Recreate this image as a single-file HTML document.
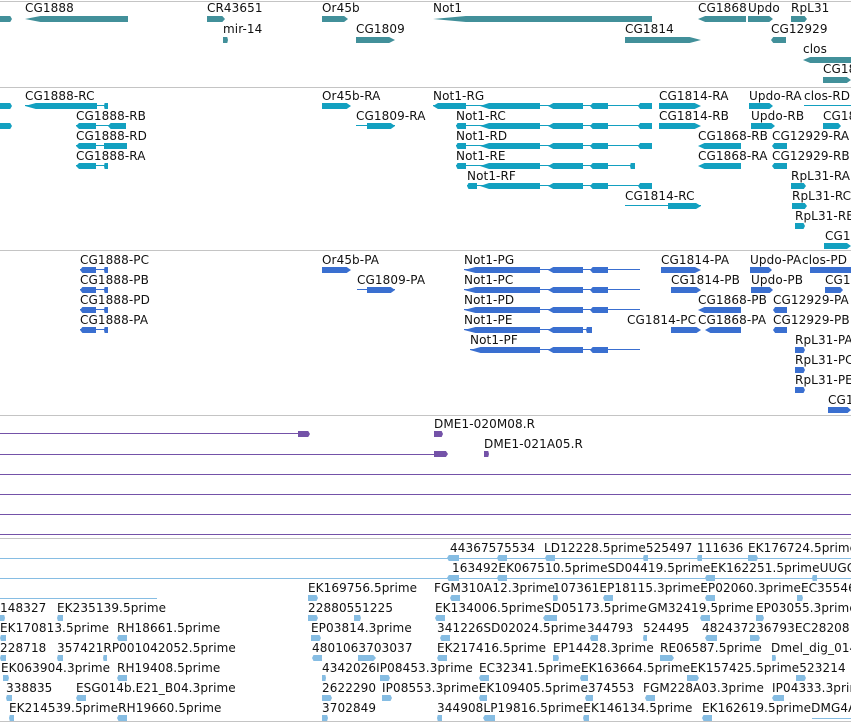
<!DOCTYPE html>
<html><head><meta charset="utf-8"><style>
body{margin:0;width:851px;height:723px;background:#fff;position:relative;overflow:hidden;font-family:"DejaVu Sans","Liberation Sans",sans-serif}
.t{position:absolute;font-size:12px;line-height:12px;color:#111;white-space:nowrap;letter-spacing:0.1px}
.b{position:absolute;height:6px}
.l{position:absolute;height:1px}
.h{position:absolute;left:0;width:851px;height:1px;background:#c4c4c4}
.g{background:#42909a}.r{background:#13a0c0}.p{background:#3a6fd0}.u{background:#7452a8}.e{background:#86bde3}
.ar{clip-path:polygon(0 0,85% 0,100% 50%,85% 100%,0 100%)}
.al{clip-path:polygon(15% 0,100% 0,100% 100%,15% 100%,0 50%)}
</style></head><body>
<div class="h" style="top:1px"></div>
<div class="h" style="top:87px"></div>
<div class="h" style="top:250px"></div>
<div class="h" style="top:415px"></div>
<div class="h" style="top:538px"></div>
<div class="h" style="top:721px"></div>

<!-- genes -->
<div class="b g ar" style="left:0;width:12px;top:16px"></div>
<div class="t" style="left:25px;top:2px">CG1888</div><div class="b g al" style="left:25px;width:103px;top:16px"></div>
<div class="t" style="left:207px;top:2px">CR43651</div><div class="b g ar" style="left:207px;width:18px;top:16px"></div>
<div class="t" style="left:223px;top:23px">mir-14</div><div class="b g ar" style="left:223px;width:5px;top:37px"></div>
<div class="t" style="left:322px;top:2px">Or45b</div><div class="b g ar" style="left:322px;width:26px;top:16px"></div>
<div class="t" style="left:356px;top:23px">CG1809</div><div class="b g ar" style="left:356px;width:39px;top:37px"></div>
<div class="t" style="left:433px;top:2px">Not1</div><div class="b g al" style="left:433px;width:219px;top:16px"></div>
<div class="t" style="left:625px;top:23px">CG1814</div><div class="b g ar" style="left:625px;width:76px;top:37px"></div>
<div class="t" style="left:698px;top:2px">CG1868</div><div class="b g al" style="left:698px;width:48px;top:16px"></div>
<div class="t" style="left:748px;top:2px">Updo</div><div class="b g ar" style="left:748px;width:25px;top:16px"></div>
<div class="t" style="left:791px;top:2px">RpL31</div><div class="b g ar" style="left:791px;width:16px;top:16px"></div>
<div class="t" style="left:771px;top:23px">CG12929</div><div class="b g al" style="left:771px;width:15px;top:37px"></div>
<div class="t" style="left:803px;top:43px">clos</div><div class="b g al" style="left:803px;width:48px;top:57px"></div>
<div class="t" style="left:823px;top:63px">CG18</div><div class="b g ar" style="left:823px;width:28px;top:77px"></div>

<!-- transcripts -->
<div class="b r ar" style="left:0;width:12px;top:103px"></div>
<div class="b r ar" style="left:0;width:12px;top:123px"></div>
<div class="t" style="left:25px;top:90px">CG1888-RC</div><div class="l r" style="left:25px;width:83px;top:105px"></div><div class="b r al" style="left:25px;width:72px;top:103px"></div><div class="b r al" style="left:104px;width:4px;top:103px"></div>
<div class="t" style="left:76px;top:110px">CG1888-RB</div><div class="l r" style="left:76px;width:50px;top:125px"></div><div class="b r al" style="left:76px;width:20px;top:123px"></div><div class="b r al" style="left:108px;width:18px;top:123px"></div>
<div class="t" style="left:76px;top:130px">CG1888-RD</div><div class="l r" style="left:76px;width:51px;top:145px"></div><div class="b r al" style="left:76px;width:20px;top:143px"></div><div class="b r" style="left:104px;width:23px;top:143px"></div>
<div class="t" style="left:76px;top:150px">CG1888-RA</div><div class="l r" style="left:76px;width:32px;top:165px"></div><div class="b r al" style="left:76px;width:20px;top:163px"></div><div class="b r al" style="left:104px;width:4px;top:163px"></div>
<div class="t" style="left:322px;top:90px">Or45b-RA</div><div class="b r ar" style="left:322px;width:29px;top:103px"></div>
<div class="t" style="left:356px;top:110px">CG1809-RA</div><div class="l r" style="left:356px;width:39px;top:125px"></div><div class="b r ar" style="left:367px;width:28px;top:123px"></div>

<div class="t" style="left:433px;top:90px">Not1-RG</div><div class="l r" style="left:433px;width:219px;top:105px"></div><div class="b r al" style="left:433px;width:33px;top:103px"></div><div class="b r al" style="left:480px;width:60px;top:103px"></div><div class="b r al" style="left:548px;width:35px;top:103px"></div><div class="b r al" style="left:590px;width:18px;top:103px"></div><div class="b r al" style="left:638px;width:14px;top:103px"></div>
<div class="t" style="left:456px;top:110px">Not1-RC</div><div class="l r" style="left:456px;width:196px;top:125px"></div><div class="b r al" style="left:456px;width:10px;top:123px"></div><div class="b r al" style="left:480px;width:60px;top:123px"></div><div class="b r al" style="left:548px;width:35px;top:123px"></div><div class="b r al" style="left:590px;width:18px;top:123px"></div><div class="b r al" style="left:638px;width:14px;top:123px"></div>
<div class="t" style="left:456px;top:130px">Not1-RD</div><div class="l r" style="left:456px;width:196px;top:145px"></div><div class="b r al" style="left:456px;width:10px;top:143px"></div><div class="b r al" style="left:480px;width:60px;top:143px"></div><div class="b r al" style="left:548px;width:35px;top:143px"></div><div class="b r al" style="left:590px;width:18px;top:143px"></div><div class="b r al" style="left:638px;width:14px;top:143px"></div>
<div class="t" style="left:456px;top:150px">Not1-RE</div><div class="l r" style="left:456px;width:179px;top:165px"></div><div class="b r al" style="left:456px;width:10px;top:163px"></div><div class="b r al" style="left:480px;width:60px;top:163px"></div><div class="b r al" style="left:548px;width:35px;top:163px"></div><div class="b r al" style="left:590px;width:18px;top:163px"></div><div class="b r al" style="left:630px;width:5px;top:163px"></div>
<div class="t" style="left:467px;top:170px">Not1-RF</div><div class="l r" style="left:467px;width:185px;top:185px"></div><div class="b r al" style="left:467px;width:10px;top:183px"></div><div class="b r al" style="left:480px;width:60px;top:183px"></div><div class="b r al" style="left:548px;width:35px;top:183px"></div><div class="b r al" style="left:590px;width:18px;top:183px"></div><div class="b r al" style="left:638px;width:14px;top:183px"></div>
<div class="t" style="left:625px;top:190px">CG1814-RC</div><div class="l r" style="left:625px;width:76px;top:205px"></div><div class="b r ar" style="left:668px;width:33px;top:203px"></div>
<div class="t" style="left:659px;top:90px">CG1814-RA</div><div class="b r ar" style="left:659px;width:42px;top:103px"></div>
<div class="t" style="left:659px;top:110px">CG1814-RB</div><div class="b r ar" style="left:659px;width:42px;top:123px"></div>
<div class="t" style="left:698px;top:130px">CG1868-RB</div><div class="b r al" style="left:698px;width:43px;top:143px"></div>
<div class="t" style="left:698px;top:150px">CG1868-RA</div><div class="b r al" style="left:698px;width:43px;top:163px"></div>
<div class="t" style="left:749px;top:90px">Updo-RA</div><div class="b r ar" style="left:749px;width:24px;top:103px"></div>
<div class="t" style="left:804px;top:90px">clos-RD</div><div class="l r" style="left:804px;width:47px;top:105px"></div>
<div class="t" style="left:751px;top:110px">Updo-RB</div><div class="b r ar" style="left:751px;width:24px;top:123px"></div>
<div class="t" style="left:823px;top:110px">CG18</div><div class="b r ar" style="left:823px;width:18px;top:123px"></div>
<div class="t" style="left:772px;top:130px">CG12929-RA</div><div class="b r al" style="left:772px;width:15px;top:143px"></div>
<div class="t" style="left:772px;top:150px">CG12929-RB</div><div class="b r al" style="left:772px;width:15px;top:163px"></div>
<div class="t" style="left:791px;top:170px">RpL31-RA</div><div class="b r ar" style="left:791px;width:15px;top:183px"></div>
<div class="t" style="left:792px;top:190px">RpL31-RC</div><div class="b r ar" style="left:792px;width:15px;top:203px"></div>
<div class="t" style="left:795px;top:210px">RpL31-RE</div><div class="b r ar" style="left:795px;width:10px;top:223px"></div>
<div class="t" style="left:825px;top:230px">CG18</div><div class="b r ar" style="left:824px;width:27px;top:243px"></div>

<!-- proteins -->
<div class="t" style="left:80px;top:254px">CG1888-PC</div><div class="l p" style="left:80px;width:28px;top:269px"></div><div class="b p al" style="left:80px;width:16px;top:267px"></div><div class="b p al" style="left:104px;width:4px;top:267px"></div>
<div class="t" style="left:80px;top:274px">CG1888-PB</div><div class="l p" style="left:80px;width:28px;top:289px"></div><div class="b p al" style="left:80px;width:16px;top:287px"></div><div class="b p al" style="left:104px;width:4px;top:287px"></div>
<div class="t" style="left:80px;top:294px">CG1888-PD</div><div class="l p" style="left:80px;width:28px;top:309px"></div><div class="b p al" style="left:80px;width:16px;top:307px"></div><div class="b p al" style="left:104px;width:4px;top:307px"></div>
<div class="t" style="left:80px;top:314px">CG1888-PA</div><div class="l p" style="left:80px;width:28px;top:329px"></div><div class="b p al" style="left:80px;width:16px;top:327px"></div><div class="b p al" style="left:104px;width:4px;top:327px"></div>
<div class="t" style="left:322px;top:254px">Or45b-PA</div><div class="b p ar" style="left:322px;width:29px;top:267px"></div>
<div class="t" style="left:357px;top:274px">CG1809-PA</div><div class="l p" style="left:357px;width:38px;top:289px"></div><div class="b p ar" style="left:367px;width:28px;top:287px"></div>
<div class="t" style="left:464px;top:254px">Not1-PG</div><div class="l p" style="left:464px;width:176px;top:269px"></div><div class="b p al" style="left:464px;width:76px;top:267px"></div><div class="b p al" style="left:548px;width:35px;top:267px"></div><div class="b p al" style="left:590px;width:18px;top:267px"></div>
<div class="t" style="left:464px;top:274px">Not1-PC</div><div class="l p" style="left:464px;width:176px;top:289px"></div><div class="b p al" style="left:464px;width:76px;top:287px"></div><div class="b p al" style="left:548px;width:35px;top:287px"></div><div class="b p al" style="left:590px;width:18px;top:287px"></div>
<div class="t" style="left:464px;top:294px">Not1-PD</div><div class="l p" style="left:464px;width:176px;top:309px"></div><div class="b p al" style="left:464px;width:76px;top:307px"></div><div class="b p al" style="left:548px;width:35px;top:307px"></div><div class="b p al" style="left:590px;width:18px;top:307px"></div>
<div class="t" style="left:464px;top:314px">Not1-PE</div><div class="l p" style="left:464px;width:128px;top:329px"></div><div class="b p al" style="left:464px;width:76px;top:327px"></div><div class="b p al" style="left:548px;width:35px;top:327px"></div><div class="b p al" style="left:586px;width:6px;top:327px"></div>
<div class="t" style="left:470px;top:334px">Not1-PF</div><div class="l p" style="left:470px;width:170px;top:349px"></div><div class="b p al" style="left:470px;width:70px;top:347px"></div><div class="b p al" style="left:548px;width:35px;top:347px"></div><div class="b p al" style="left:590px;width:18px;top:347px"></div>
<div class="t" style="left:661px;top:254px">CG1814-PA</div><div class="b p ar" style="left:661px;width:40px;top:267px"></div>
<div class="t" style="left:671px;top:274px">CG1814-PB</div><div class="b p ar" style="left:671px;width:30px;top:287px"></div>
<div class="t" style="left:698px;top:294px">CG1868-PB</div><div class="b p al" style="left:698px;width:43px;top:307px"></div>
<div class="t" style="left:627px;top:314px">CG1814-PC</div><div class="b p ar" style="left:671px;width:30px;top:327px"></div>
<div class="t" style="left:698px;top:314px">CG1868-PA</div><div class="b p al" style="left:705px;width:36px;top:327px"></div>
<div class="t" style="left:750px;top:254px">Updo-PA</div><div class="b p ar" style="left:750px;width:22px;top:267px"></div>
<div class="t" style="left:802px;top:254px">clos-PD</div><div class="b p" style="left:810px;width:41px;top:267px"></div>
<div class="t" style="left:751px;top:274px">Updo-PB</div><div class="b p ar" style="left:751px;width:22px;top:287px"></div>
<div class="t" style="left:825px;top:274px">CG1</div><div class="b p ar" style="left:825px;width:18px;top:287px"></div>
<div class="t" style="left:773px;top:294px">CG12929-PA</div><div class="b p al" style="left:773px;width:14px;top:307px"></div>
<div class="t" style="left:773px;top:314px">CG12929-PB</div><div class="b p al" style="left:773px;width:14px;top:327px"></div>
<div class="t" style="left:795px;top:334px">RpL31-PA</div><div class="b p ar" style="left:795px;width:10px;top:347px"></div>
<div class="t" style="left:795px;top:354px">RpL31-PC</div><div class="b p ar" style="left:795px;width:10px;top:367px"></div>
<div class="t" style="left:795px;top:374px">RpL31-PE</div><div class="b p ar" style="left:795px;width:10px;top:387px"></div>
<div class="t" style="left:828px;top:394px">CG1</div><div class="b p ar" style="left:828px;width:23px;top:407px"></div>

<!-- purple -->
<div class="l u" style="left:0;width:300px;top:433px"></div><div class="b u ar" style="left:298px;width:12px;top:431px"></div>
<div class="t" style="left:434px;top:418px">DME1-020M08.R</div><div class="b u ar" style="left:434px;width:9px;top:431px"></div>
<div class="l u" style="left:0;width:440px;top:454px"></div><div class="b u ar" style="left:434px;width:14px;top:451px"></div>
<div class="t" style="left:484px;top:438px">DME1-021A05.R</div><div class="b u ar" style="left:484px;width:5px;top:451px"></div>
<div class="l u" style="left:0;width:851px;top:474px"></div>
<div class="l u" style="left:0;width:851px;top:494px"></div>
<div class="l u" style="left:0;width:851px;top:514px"></div>
<div class="l u" style="left:0;width:851px;top:534px"></div>

<!-- EST -->
<div class="l e" style="left:0;width:851px;top:558px"></div>
<div class="l e" style="left:0;width:851px;top:578px"></div>
<div class="l e" style="left:0;width:157px;top:598px"></div>
<div class="t" style="left:450px;top:542px">44367575534</div>
<div class="t" style="left:544px;top:542px">LD12228.5prime525497</div>
<div class="t" style="left:697px;top:542px">111636</div>
<div class="t" style="left:748px;top:542px">EK176724.5prime</div>
<div class="t" style="left:452px;top:562px">163492EK067510.5primeSD04419.5primeEK162251.5primeUUGC0</div>
<div class="t" style="left:308px;top:582px">EK169756.5prime</div>
<div class="t" style="left:434px;top:582px">FGM310A12.3prime</div>
<div class="t" style="left:553px;top:582px">107361EP18115.3primeEP02060.3primeEC35546</div>
<div class="t" style="left:0px;top:602px">148327</div>
<div class="t" style="left:57px;top:602px">EK235139.5prime</div>
<div class="t" style="left:308px;top:602px">22880551225</div>
<div class="t" style="left:435px;top:602px">EK134006.5primeSD05173.5prime</div>
<div class="t" style="left:648px;top:602px">GM32419.5prime</div>
<div class="t" style="left:756px;top:602px">EP03055.3prime</div>
<div class="t" style="left:0px;top:622px">EK170813.5prime</div>
<div class="t" style="left:117px;top:622px">RH18661.5prime</div>
<div class="t" style="left:311px;top:622px">EP03814.3prime</div>
<div class="t" style="left:437px;top:622px">341226SD02024.5prime</div>
<div class="t" style="left:587px;top:622px">344793</div>
<div class="t" style="left:643px;top:622px">524495</div>
<div class="t" style="left:702px;top:622px">48243723679​3EC28208</div>
<div class="t" style="left:0px;top:642px">228718</div>
<div class="t" style="left:57px;top:642px">357421RP001042052.5prime</div>
<div class="t" style="left:312px;top:642px">4801063703037</div>
<div class="t" style="left:437px;top:642px">EK217416.5prime</div>
<div class="t" style="left:553px;top:642px">EP14428.3prime</div>
<div class="t" style="left:660px;top:642px">RE06587.5prime</div>
<div class="t" style="left:771px;top:642px">Dmel_dig_014</div>
<div class="t" style="left:1px;top:662px">EK063904.3prime</div>
<div class="t" style="left:117px;top:662px">RH19408.5prime</div>
<div class="t" style="left:322px;top:662px">4342026IP08453.3prime</div>
<div class="t" style="left:479px;top:662px">EC32341.5primeEK163664.5primeEK157425.5prime523214</div>
<div class="t" style="left:6px;top:682px">338835</div>
<div class="t" style="left:76px;top:682px">ESG014b.E21_B04.3prime</div>
<div class="t" style="left:322px;top:682px">2622290</div>
<div class="t" style="left:382px;top:682px">IP08553.3primeEK109405.5prime374553</div>
<div class="t" style="left:643px;top:682px">FGM228A03.3prime</div>
<div class="t" style="left:772px;top:682px">IP04333.3prime</div>
<div class="t" style="left:9px;top:702px">EK214539.5primeRH19660.5prime</div>
<div class="t" style="left:322px;top:702px">3702849</div>
<div class="t" style="left:437px;top:702px">344908LP19816.5primeEK146134.5prime</div>
<div class="t" style="left:702px;top:702px">EK162619.5primeDMG4A</div>

<!-- EST glyphs -->
<div class="b e al" style="left:447px;width:12px;top:555px"></div><div class="b e al" style="left:497px;width:10px;top:555px"></div><div class="b e al" style="left:545px;width:10px;top:555px"></div><div class="b e al" style="left:643px;width:5px;top:555px"></div><div class="b e al" style="left:697px;width:5px;top:555px"></div><div class="b e ar" style="left:748px;width:10px;top:555px"></div>
<div class="b e al" style="left:447px;width:12px;top:575px"></div><div class="b e al" style="left:497px;width:10px;top:575px"></div><div class="l e" style="left:605px;width:40px;top:578px"></div><div class="b e al" style="left:705px;width:10px;top:575px"></div><div class="b e al" style="left:812px;width:5px;top:575px"></div>
<div class="b e ar" style="left:308px;width:10px;top:595px"></div><div class="b e al" style="left:450px;width:10px;top:595px"></div><div class="b e ar" style="left:553px;width:5px;top:595px"></div><div class="b e al" style="left:603px;width:10px;top:595px"></div><div class="b e al" style="left:705px;width:10px;top:595px"></div><div class="b e ar" style="left:797px;width:6px;top:595px"></div>
<div class="b e ar" style="left:0px;width:5px;top:615px"></div><div class="b e al" style="left:57px;width:6px;top:615px"></div><div class="b e ar" style="left:308px;width:10px;top:615px"></div><div class="b e ar" style="left:354px;width:7px;top:615px"></div><div class="b e al" style="left:435px;width:10px;top:615px"></div><div class="b e al" style="left:543px;width:14px;top:615px"></div><div class="b e al" style="left:700px;width:10px;top:615px"></div><div class="b e ar" style="left:756px;width:8px;top:615px"></div>
<div class="b e al" style="left:0px;width:6px;top:635px"></div><div class="b e al" style="left:117px;width:10px;top:635px"></div><div class="b e ar" style="left:311px;width:10px;top:635px"></div><div class="b e al" style="left:440px;width:10px;top:635px"></div><div class="b e al" style="left:590px;width:8px;top:635px"></div><div class="b e al" style="left:643px;width:4px;top:635px"></div><div class="b e al" style="left:705px;width:12px;top:635px"></div><div class="b e ar" style="left:750px;width:10px;top:635px"></div>
<div class="b e al" style="left:0px;width:6px;top:655px"></div><div class="b e al" style="left:57px;width:6px;top:655px"></div><div class="b e al" style="left:103px;width:4px;top:655px"></div><div class="b e al" style="left:312px;width:10px;top:655px"></div><div class="b e ar" style="left:358px;width:18px;top:655px"></div><div class="b e al" style="left:437px;width:10px;top:655px"></div><div class="b e ar" style="left:553px;width:6px;top:655px"></div><div class="b e ar" style="left:660px;width:14px;top:655px"></div><div class="b e ar" style="left:772px;width:4px;top:655px"></div>
<div class="b e ar" style="left:3px;width:6px;top:675px"></div><div class="b e al" style="left:117px;width:10px;top:675px"></div><div class="b e ar" style="left:322px;width:4px;top:675px"></div><div class="b e ar" style="left:380px;width:10px;top:675px"></div><div class="b e al" style="left:479px;width:10px;top:675px"></div><div class="b e al" style="left:580px;width:8px;top:675px"></div><div class="b e ar" style="left:687px;width:12px;top:675px"></div><div class="b e ar" style="left:796px;width:10px;top:675px"></div>
<div class="b e al" style="left:6px;width:6px;top:695px"></div><div class="b e al" style="left:76px;width:10px;top:695px"></div><div class="b e ar" style="left:322px;width:10px;top:695px"></div><div class="b e ar" style="left:382px;width:10px;top:695px"></div><div class="b e al" style="left:479px;width:8px;top:695px"></div><div class="b e al" style="left:585px;width:8px;top:695px"></div><div class="b e al" style="left:645px;width:10px;top:695px"></div><div class="b e al" style="left:772px;width:12px;top:695px"></div>
<div class="b e al" style="left:9px;width:5px;top:715px"></div><div class="b e al" style="left:117px;width:10px;top:715px"></div><div class="b e ar" style="left:322px;width:6px;top:715px"></div><div class="b e al" style="left:437px;width:5px;top:715px"></div><div class="b e al" style="left:483px;width:12px;top:715px"></div><div class="b e al" style="left:583px;width:6px;top:715px"></div><div class="b e al" style="left:702px;width:10px;top:715px"></div><div class="l e" style="left:812px;width:39px;top:718px"></div>
</body></html>
